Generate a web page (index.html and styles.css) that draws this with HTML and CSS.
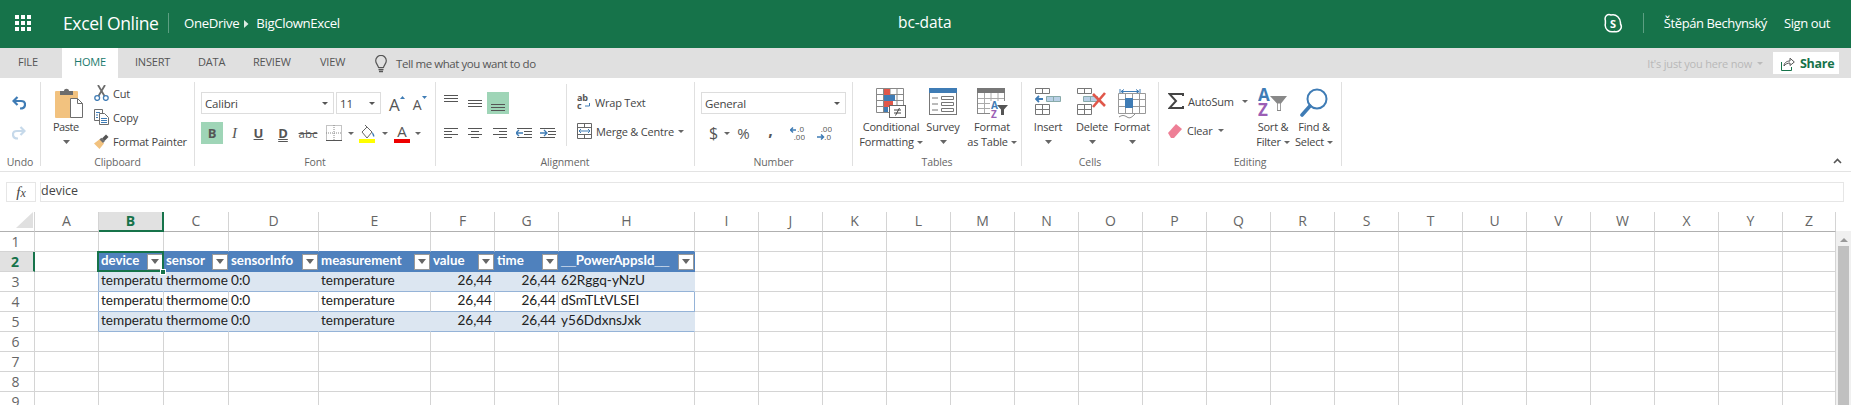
FILE: index.html
```html
<!DOCTYPE html>
<html lang="en">
<head>
<meta charset="utf-8">
<title>bc-data</title>
<link rel="stylesheet" href="styles.css">
</head>
<body>
<header class="top">
  <svg class="waffle" width="16" height="16" viewBox="0 0 16 16" fill="#fff"><rect width="4" height="4"/><rect x="6" width="4" height="4"/><rect x="12" width="4" height="4"/><rect y="6" width="4" height="4"/><rect x="6" y="6" width="4" height="4"/><rect x="12" y="6" width="4" height="4"/><rect y="12" width="4" height="4"/><rect x="6" y="12" width="4" height="4"/><rect x="12" y="12" width="4" height="4"/></svg>
  <span class="app">Excel Online</span>
  <span class="vsep"></span>
  <span class="crumb">OneDrive</span>
  <svg class="crumb-arrow" width="5" height="8" viewBox="0 0 5 8" fill="#dcebe3"><path d="M0 0l4.5 4L0 8z"/></svg>
  <span class="crumb">BigClownExcel</span>
  <span class="doc">bc-data</span>
  <svg class="skype" width="20" height="21" viewBox="0 0 20 21" fill="none" stroke="#fff" stroke-width="1.5"><path d="M2.4 7.5C1 3.5 4.800 .2 8 2c5-1.400 10 3 9.500 9 2.500 4-1.500 9-6 7.500C6 20 1.200 16 2.400 10.500z" stroke-linejoin="round"/><text x="10" y="15" text-anchor="middle" class="skype-s">S</text></svg>
  <span class="vsep sep-right"></span>
  <span class="user">Štěpán Bechynský</span>
  <span class="user signout">Sign out</span>
</header>

<nav class="tabs">
  <span class="tab file">FILE</span>
  <span class="tab home">HOME</span>
  <span class="tab insert">INSERT</span>
  <span class="tab data">DATA</span>
  <span class="tab review">REVIEW</span>
  <span class="tab view">VIEW</span>
  <svg class="bulb" width="12" height="19" viewBox="0 0 12 19" fill="none" stroke="#555" stroke-width="1.2"><path d="M3.500 12.500C3 10 .7 8.500 .7 5.700a5.300 5.300 0 0 1 10.600 0c0 2.800-2.300 4.300-2.800 6.800z"/><path d="M3.500 14.500h5M4 16.500h4" stroke-width="1.500"/></svg>
  <span class="tell">Tell me what you want to do</span>
  <span class="presence">It's just you here now</span>
  <svg class="caret presence-caret" width="6" height="3" viewBox="0 0 6 3"><path d="M0 0h6L3 3z" fill="#bbb"/></svg>
  <span class="share">
    <svg width="14" height="15" viewBox="0 0 14 15" fill="none" stroke="#16734a" stroke-width="1"><path d="M.5 6v8.500h10V11"/><path d="M3 10c0-3 2.500-5 6-5V2.200L13.300 6 9 9.500V7C6.500 7 4.500 8 3 10z" stroke="#555"/></svg>
    <b>Share</b>
  </span>
</nav>

<section class="ribbon">
  <div class="group g-undo">
    <div class="body undo-body">
      <svg width="14" height="14" viewBox="0 0 14 14" fill="none" stroke="#3f7cb5" stroke-width="2.200"><path d="M5.500 1L1.500 5l4 4"/><path d="M2 5h7c2.500 0 4 1.500 4 3.500S11.500 12.500 8 12.500"/></svg>
      <svg width="14" height="14" viewBox="0 0 14 14" fill="none" stroke="#c6d9ea" stroke-width="2.200"><path d="M8.500 1l4 4-4 4"/><path d="M12 5H5C2.500 5 1 6.500 1 8.500s1.500 4 5 4"/></svg>
    </div>
    <div class="label">Undo</div>
  </div>

  <div class="group g-clip">
    <div class="body clip-body">
      <div class="big paste">
        <svg width="28" height="31" viewBox="0 0 28 31"><rect y="3" width="23" height="27" rx="1" fill="#f2c27f"/><path d="M5 3h4c0-3 5-3 5 0h4v4H5z" fill="#6d6d6d"/><path d="M15.500 10.500h7l5 5v14h-12z" fill="#fff" stroke="#6d6d6d"/><path d="M22.500 10.500v5h5" fill="none" stroke="#6d6d6d"/></svg>
        <span class="t">Paste</span>
        <svg class="caret big-caret" width="7" height="4" viewBox="0 0 7 4"><path d="M0 0h7L3.500 4z" fill="#666"/></svg>
      </div>
      <div class="clip-list">
        <div class="row-item"><svg width="15" height="16" viewBox="0 0 15 16" fill="none"><path d="M4 0l6.500 11M11 0L4.500 11" stroke="#6d6d6d" stroke-width="1.800"/><circle cx="3.200" cy="13" r="2.400" stroke="#3f7cb5" stroke-width="1.300"/><circle cx="11.800" cy="13" r="2.400" stroke="#3f7cb5" stroke-width="1.300"/></svg><span>Cut</span></div>
        <div class="row-item"><svg width="15" height="16" viewBox="0 0 15 16" fill="#fff" stroke="#6d6d6d"><path d="M.5.500h8v11h-8z"/><path d="M5.500 4.500h5l4 4v7h-9z"/><path d="M2 3.500h4M2 6h2M2 8.500h2" stroke="#3f7cb5"/><path d="M7 9.500h6M7 11.500h6M7 13.500h6" stroke="#3f7cb5"/></svg><span>Copy</span></div>
        <div class="row-item"><svg width="15" height="15" viewBox="0 0 15 15"><path d="M0 9.500L6 5l4 4.500-4.500 5.500z" fill="#f2c27f"/><path d="M5.500 5.500l1.800-1.800 3.500 3.500L9 9z" fill="#6d6d6d"/><path d="M8 4.500l4-4 2.500 2.500-4 4z" fill="#555"/></svg><span>Format Painter</span></div>
      </div>
    </div>
    <div class="label">Clipboard</div>
  </div>

  <div class="group g-font">
    <div class="body font-body">
      <div class="tool-row first-row">
        <div class="select font-name"><span>Calibri</span><svg class="caret" width="6" height="3" viewBox="0 0 6 3"><path d="M0 0h6L3 3z" fill="#555"/></svg></div>
        <div class="select font-size"><span>11</span><svg class="caret" width="6" height="3" viewBox="0 0 6 3"><path d="M0 0h6L3 3z" fill="#555"/></svg></div>
        <span class="grow">A<svg width="5" height="3" viewBox="0 0 5 3"><path d="M2.500 0L5 3H0z" fill="#3f7cb5"/></svg></span>
        <span class="shrink">A<svg width="5" height="3" viewBox="0 0 5 3"><path d="M0 0h5L2.500 3z" fill="#3f7cb5"/></svg></span>
      </div>
      <div class="tool-row second-row">
        <span class="fmt on w22 bold">B</span>
        <span class="fmt w23 ital">I</span>
        <span class="fmt w25 under">U</span>
        <span class="fmt w24 dbl">D</span>
        <span class="fmt w26 strike">abc</span>
        <span class="fmt w26"><svg width="16" height="16" viewBox="0 0 16 16" fill="none" stroke="#888" stroke-dasharray="1 1"><path d="M.5.500h15v15H.5zM8 0v16M0 8h16"/><path d="M0 15.500h16" stroke="#555" stroke-dasharray="none"/></svg></span>
        <span class="fmt w8"><svg class="caret" width="6" height="3" viewBox="0 0 6 3"><path d="M0 0h6L3 3z" fill="#666"/></svg></span>
        <span class="fmt w25 fill"><svg width="17" height="19" viewBox="0 0 17 19"><path d="M3 8l5-5 5 5-5 6z" fill="#fff" stroke="#666"/><path d="M6 1l2 2" stroke="#666"/><path d="M13 8c2 1.500 3 4 2 5-1.200-.5-2-3-2-5z" fill="#3f7cb5"/><rect y="15" width="16" height="4" fill="#ffff00"/></svg></span>
        <span class="fmt w10"><svg class="caret" width="6" height="3" viewBox="0 0 6 3"><path d="M0 0h6L3 3z" fill="#666"/></svg></span>
        <span class="fmt w24 color-a">A</span>
        <span class="fmt w8"><svg class="caret" width="6" height="3" viewBox="0 0 6 3"><path d="M0 0h6L3 3z" fill="#666"/></svg></span>
      </div>
    </div>
    <div class="label">Font</div>
  </div>

  <div class="group g-align">
    <div class="body align-body">
      <div class="align-grid">
        <div class="tool-row a-row1">
          <span class="al w24"><svg width="14" height="7" viewBox="0 0 14 7" stroke="#555"><path d="M0 .500h14M0 3.500h14M0 6.500h14"/></svg></span>
          <span class="al w24"><svg width="14" height="7" viewBox="0 0 14 7" stroke="#555"><path d="M0 .500h14M0 3.500h14M0 6.500h14"/></svg></span>
          <span class="al on w22 bottom"><svg width="14" height="7" viewBox="0 0 14 7" stroke="#555"><path d="M0 .500h14M0 3.500h14M0 6.500h14"/></svg></span>
        </div>
        <div class="tool-row a-row2">
          <span class="al w24"><svg width="14" height="11" viewBox="0 0 14 11" stroke="#555"><path d="M0 .500h14M0 3.500h8M0 6.500h14M0 9.500h8"/></svg></span>
          <span class="al w24"><svg width="14" height="11" viewBox="0 0 14 11" stroke="#555"><path d="M0 .500h14M3 3.500h8M0 6.500h14M3 9.500h8"/></svg></span>
          <span class="al w25"><svg width="14" height="11" viewBox="0 0 14 11" stroke="#555"><path d="M0 .500h14M6 3.500h8M0 6.500h14M6 9.500h8"/></svg></span>
          <span class="al w24"><svg width="16" height="11" viewBox="0 0 16 11" fill="none" stroke="#555"><path d="M1 .500h15M8 3.500h8M8 6.500h8M1 9.500h15"/><path d="M0 5h7M3 2L0 5l3 3" stroke="#3f7cb5" stroke-width="1.300"/></svg></span>
          <span class="al w24"><svg width="16" height="11" viewBox="0 0 16 11" fill="none" stroke="#555"><path d="M0 .500h15M8 3.500h8M8 6.500h8M0 9.500h15"/><path d="M0 5h7M4 2l3 3-3 3" stroke="#3f7cb5" stroke-width="1.300"/></svg></span>
        </div>
      </div>
      <div class="wrap-col">
        <div class="row-item"><svg width="14" height="16" viewBox="0 0 14 16"><text x="0" y="7" class="mini-ab">ab</text><text x="0" y="15" class="mini-ab">c</text><path d="M12.500 9v3H8" fill="none" stroke="#3f7cb5"/></svg><span>Wrap Text</span></div>
        <div class="row-item"><svg width="15" height="16" viewBox="0 0 15 16" fill="none" stroke="#666"><path d="M.5.500h14v15H.5zM0 4.500h15M0 11.500h15M7.500 0v4M7.500 12v4"/><path d="M2 8h11M4 6L2 8l2 2M11 6l2 2-2 2" stroke="#3f7cb5"/></svg><span>Merge &amp; Centre</span><svg class="caret" width="6" height="3" viewBox="0 0 6 3"><path d="M0 0h6L3 3z" fill="#666"/></svg></div>
      </div>
    </div>
    <div class="label">Alignment</div>
  </div>

  <div class="group g-number">
    <div class="body number-body">
      <div class="select general"><span>General</span><svg class="caret" width="6" height="3" viewBox="0 0 6 3"><path d="M0 0h6L3 3z" fill="#555"/></svg></div>
      <div class="tool-row num-row">
        <span class="num dollar">$</span>
        <svg class="caret" width="6" height="3" viewBox="0 0 6 3"><path d="M0 0h6L3 3z" fill="#666"/></svg>
        <span class="num pct">%</span>
        <span class="num comma">,</span>
        <svg class="dec" width="15" height="16" viewBox="0 0 15 16"><text x="14" y="7" text-anchor="end" class="mini-dec">.0</text><text x="15" y="15" text-anchor="end" class="mini-dec">.00</text><path d="M0 5h6M3 2.500L.5 5 3 7.500" fill="none" stroke="#3f7cb5" stroke-width="1.500"/></svg>
        <svg class="dec" width="15" height="16" viewBox="0 0 15 16"><text x="15" y="7" text-anchor="end" class="mini-dec">.00</text><text x="14" y="15" text-anchor="end" class="mini-dec">.0</text><path d="M0 12h6M4 9.500L6.500 12 4 14.500" fill="none" stroke="#3f7cb5" stroke-width="1.500"/></svg>
      </div>
    </div>
    <div class="label">Number</div>
  </div>

  <div class="group g-tables">
    <div class="body big-row tables-body">
      <div class="big cf">
        <svg width="30" height="31" viewBox="0 0 30 31"><g fill="none" stroke="#888"><path d="M.5.500h27v24H.5zM.5 6.500h27M.5 12.500h27M.5 18.500h27M7.500 0v25M14 0v25M21 0v25"/></g><path d="M8 1h6v6H8z" fill="#e0574a"/><path d="M8 7h11v6H8z" fill="#3f7cb5"/><path d="M8 13h9v6H8z" fill="#e0574a"/><path d="M8 19h4v5H8z" fill="#3f7cb5"/><rect x="13.500" y="17.500" width="16" height="12" fill="#fff" stroke="#666"/><path d="M18 22h7M18 25h7M23.500 20l-4 7.500" fill="none" stroke="#444"/></svg>
        <span class="t">Conditional</span>
        <span class="t">Formatting<svg class="caret in" width="6" height="3" viewBox="0 0 6 3"><path d="M0 0h6L3 3z" fill="#666"/></svg></span>
      </div>
      <div class="big survey">
        <svg width="28" height="31" viewBox="0 0 28 31"><rect x=".5" y=".5" width="27" height="26" fill="#fff" stroke="#777"/><rect width="28" height="5" fill="#3f7cb5"/><path d="M3 10h6M3 16h6M3 22h6" stroke="#777"/><path d="M12.500 8.500h12v3h-12zM12.500 14.500h12v3h-12zM12.500 20.500h12v3h-12z" fill="none" stroke="#777"/></svg>
        <span class="t">Survey</span>
        <svg class="caret big-caret" width="7" height="4" viewBox="0 0 7 4"><path d="M0 0h7L3.500 4z" fill="#666"/></svg>
      </div>
      <div class="big fat">
        <svg width="31" height="31" viewBox="0 0 31 31"><rect x=".5" y=".5" width="27" height="25" fill="#fff" stroke="#888"/><path d="M0 0h28v5H0z" fill="#777"/><path d="M1 10.500h26M1 15.500h26M1 20.500h26M7.500 5v20M14 5v20M21 5v20" stroke="#aaa"/><rect x="13" y="13" width="18" height="18" fill="#fff"/><text x="14" y="21" class="mini-a">A</text><text x="14" y="30" class="mini-z">Z</text><path d="M20 17h11l-4 4.500V27h-3v-5.500z" fill="#555"/></svg>
        <span class="t">Format</span>
        <span class="t">as Table<svg class="caret in" width="6" height="3" viewBox="0 0 6 3"><path d="M0 0h6L3 3z" fill="#666"/></svg></span>
      </div>
    </div>
    <div class="label">Tables</div>
  </div>

  <div class="group g-cells">
    <div class="body big-row cells-body">
      <div class="big b-insert">
        <svg width="26" height="31" viewBox="0 0 26 31" fill="none" stroke="#777"><path d="M.5.500h14v5H.5zM7.500 0v6M.5 16.500h14v10H.5zM7.500 16v11M0 21.500h15"/><path d="M11.500 8.500h14v5h-14zM18.500 8v6" fill="#b9d0e6" stroke="#8aa"/><path d="M1 11h7M4 8l-3 3 3 3" stroke="#3f7cb5" stroke-width="1.800"/></svg>
        <span class="t">Insert</span>
        <svg class="caret big-caret" width="7" height="4" viewBox="0 0 7 4"><path d="M0 0h7L3.500 4z" fill="#666"/></svg>
      </div>
      <div class="big b-delete">
        <svg width="30" height="31" viewBox="0 0 30 31" fill="none" stroke="#777"><path d="M.5.500h14v5H.5zM7.500 0v6M.5 16.500h14v10H.5zM7.500 16v11M0 21.500h15"/><path d="M6.500 8.500h14v5h-14zM13.500 8v6" fill="#b9d0e6" stroke="#8aa"/><path d="M16 6l12 12M28 5L16 19" stroke="#e0574a" stroke-width="2.600"/></svg>
        <span class="t">Delete</span>
        <svg class="caret big-caret" width="7" height="4" viewBox="0 0 7 4"><path d="M0 0h7L3.500 4z" fill="#666"/></svg>
      </div>
      <div class="big b-format">
        <svg width="28" height="31" viewBox="0 0 28 31" fill="none"><path d="M2 1v5M22 1v5M3 3.500h18M6 1.500L3 3.500l3 2M18 1.500l3 2-3 2" stroke="#3f7cb5"/><path d="M.5 5.500h27v20H.5zM7.500 5v20M14.500 5v20M21.500 5v20M0 11.500h28M0 18.500h28" stroke="#999"/><rect x="7" y="10" width="8" height="10" fill="#3f7cb5"/><path d="M1 29c3-2 5-2 8 0s5 0 8-3" stroke="#888"/></svg>
        <span class="t">Format</span>
        <svg class="caret big-caret" width="7" height="4" viewBox="0 0 7 4"><path d="M0 0h7L3.500 4z" fill="#666"/></svg>
      </div>
    </div>
    <div class="label">Cells</div>
  </div>

  <div class="group g-edit">
    <div class="body edit-body">
      <div class="edit-list">
        <div class="row-item"><svg width="16" height="16" viewBox="0 0 16 16" fill="none" stroke="#444" stroke-width="2"><path d="M15 3V1H1.500L8 8l-6.500 7H15v-2"/></svg><span>AutoSum</span><svg class="caret" width="6" height="3" viewBox="0 0 6 3"><path d="M0 0h6L3 3z" fill="#666"/></svg></div>
        <div class="row-item"><svg width="15" height="15" viewBox="0 0 15 15"><path d="M0 10l8-9 6 5-8 9H3z" fill="#ee7f96"/></svg><span class="clear-t">Clear</span><svg class="caret" width="6" height="3" viewBox="0 0 6 3"><path d="M0 0h6L3 3z" fill="#666"/></svg></div>
      </div>
      <div class="big b-sort">
        <svg width="30" height="31" viewBox="0 0 30 31"><text x="0" y="13" class="sort-a">A</text><text x="0" y="28" class="sort-z">Z</text><path d="M12 8h17l-6 7.500V23h-4v-7.500z" fill="#888"/><path d="M19.800 15.500h2.400v6.500h-2.400z" fill="#fff"/></svg>
        <span class="t">Sort &amp;</span>
        <span class="t">Filter<svg class="caret in" width="6" height="3" viewBox="0 0 6 3"><path d="M0 0h6L3 3z" fill="#666"/></svg></span>
      </div>
      <div class="big b-find">
        <svg width="28" height="31" viewBox="0 0 28 31" fill="none" stroke="#3f7cb5"><circle cx="17" cy="11" r="9.500" stroke-width="2"/><path d="M10 18L2 27" stroke-width="3.600" stroke-linecap="round"/></svg>
        <span class="t">Find &amp;</span>
        <span class="t">Select<svg class="caret in" width="6" height="3" viewBox="0 0 6 3"><path d="M0 0h6L3 3z" fill="#666"/></svg></span>
      </div>
    </div>
    <div class="label">Editing</div>
  </div>

  <svg class="collapse" width="9" height="6" viewBox="0 0 9 6" fill="none" stroke="#555" stroke-width="1.600"><path d="M1 5l3.500-3.500L8 5"/></svg>
</section>

<section class="formula">
  <span class="fx"><i>f<small>x</small></i></span>
  <div class="fbox">device</div>
</section>

<section class="sheet">
  <table class="grid">
    <colgroup><col class="c0"><col class="c64"><col class="c65"><col class="c65"><col class="c90"><col class="c112"><col class="c64"><col class="c64"><col class="c136"><col class="c64"><col class="c64"><col class="c64"><col class="c64"><col class="c64"><col class="c64"><col class="c64"><col class="c64"><col class="c64"><col class="c64"><col class="c64"><col class="c64"><col class="c64"><col class="c64"><col class="c64"><col class="c64"><col class="c64"><col class="c53"></colgroup>
    <tr class="heads">
      <th class="corner"><svg width="17" height="16" viewBox="0 0 17 16"><path d="M17 0v16H0z" fill="#e0e0e0"/></svg></th>
      <th>A</th><th class="sel">B</th><th>C</th><th>D</th><th>E</th><th>F</th><th>G</th><th>H</th><th>I</th><th>J</th><th>K</th><th>L</th><th>M</th><th>N</th><th>O</th><th>P</th><th>Q</th><th>R</th><th>S</th><th>T</th><th>U</th><th>V</th><th>W</th><th>X</th><th>Y</th><th>Z</th>
    </tr>
    <tr class="above"><th>1</th><td></td><td></td><td></td><td></td><td></td><td></td><td></td><td></td><td></td><td></td><td></td><td></td><td></td><td></td><td></td><td></td><td></td><td></td><td></td><td></td><td></td><td></td><td></td><td></td><td></td><td></td></tr>
    <tr class="thead"><th class="sel">2</th><td></td>
      <td class="active"><div class="hc"><span>device</span><i class="filter"></i></div><span class="cursor"></span><span class="handle"></span></td>
      <td><div class="hc"><span>sensor</span><i class="filter"></i></div></td>
      <td><div class="hc"><span>sensorInfo</span><i class="filter"></i></div></td>
      <td><div class="hc"><span>measurement</span><i class="filter"></i></div></td>
      <td><div class="hc"><span>value</span><i class="filter"></i></div></td>
      <td><div class="hc"><span>time</span><i class="filter"></i></div></td>
      <td><div class="hc"><span class="wide-id"><b>__</b>PowerAppsId<b>__</b></span><i class="filter"></i></div></td>
      <td></td><td></td><td></td><td></td><td></td><td></td><td></td><td></td><td></td><td></td><td></td><td></td><td></td><td></td><td></td><td></td><td></td><td></td></tr>
    <tr class="band data"><th>3</th><td></td><td>temperature</td><td>thermometer</td><td>0:0</td><td>temperature</td><td class="n">26,44</td><td class="n">26,44</td><td>62Rggq-yNzU</td><td></td><td></td><td></td><td></td><td></td><td></td><td></td><td></td><td></td><td></td><td></td><td></td><td></td><td></td><td></td><td></td><td></td><td></td></tr>
    <tr class="data"><th>4</th><td></td><td>temperature</td><td>thermometer</td><td>0:0</td><td>temperature</td><td class="n">26,44</td><td class="n">26,44</td><td>dSmTLtVLSEI</td><td></td><td></td><td></td><td></td><td></td><td></td><td></td><td></td><td></td><td></td><td></td><td></td><td></td><td></td><td></td><td></td><td></td><td></td></tr>
    <tr class="band data"><th>5</th><td></td><td>temperature</td><td>thermometer</td><td>0:0</td><td>temperature</td><td class="n">26,44</td><td class="n">26,44</td><td>y56DdxnsJxk</td><td></td><td></td><td></td><td></td><td></td><td></td><td></td><td></td><td></td><td></td><td></td><td></td><td></td><td></td><td></td><td></td><td></td><td></td></tr>
    <tr><th>6</th><td></td><td></td><td></td><td></td><td></td><td></td><td></td><td></td><td></td><td></td><td></td><td></td><td></td><td></td><td></td><td></td><td></td><td></td><td></td><td></td><td></td><td></td><td></td><td></td><td></td><td></td></tr>
    <tr><th>7</th><td></td><td></td><td></td><td></td><td></td><td></td><td></td><td></td><td></td><td></td><td></td><td></td><td></td><td></td><td></td><td></td><td></td><td></td><td></td><td></td><td></td><td></td><td></td><td></td><td></td><td></td></tr>
    <tr><th>8</th><td></td><td></td><td></td><td></td><td></td><td></td><td></td><td></td><td></td><td></td><td></td><td></td><td></td><td></td><td></td><td></td><td></td><td></td><td></td><td></td><td></td><td></td><td></td><td></td><td></td><td></td></tr>
    <tr><th>9</th><td></td><td></td><td></td><td></td><td></td><td></td><td></td><td></td><td></td><td></td><td></td><td></td><td></td><td></td><td></td><td></td><td></td><td></td><td></td><td></td><td></td><td></td><td></td><td></td><td></td><td></td></tr>
  </table>
  <aside class="scrollbar">
    <svg width="8" height="4" viewBox="0 0 8 4"><path d="M4 0l4 4H0z" fill="#999"/></svg>
    <div class="thumb"></div>
  </aside>
</section>
</body>
</html>
```
FILE: styles.css
```css
* { box-sizing: border-box; }
html, body { margin: 0; height: 405px; overflow: hidden; background: #fff; }
body { font-family: "Open Sans", "Noto Sans", sans-serif; color: #444; font-size: 11px; width: 1851px; }
svg { display: block; flex: none; }

/* top bar */
.top { height: 48px; background: #16734a; color: #fff; display: flex; align-items: center; padding-left: 15px; position: relative; padding-bottom: 2px; }
.waffle { margin-right: 32px; }
.app { font-size: 17.5px; letter-spacing: -.35px; width: 105px; }
.vsep { width: 1px; height: 20px; background: #5c9f82; }
.crumb { font-size: 13.2px; letter-spacing: -.35px; }
.top .vsep + .crumb { margin-left: 15px; }
.crumb-arrow { margin: 2px 7px 0 5px; }
.doc { position: absolute; left: 898px; top: 11px; font-size: 15.5px; letter-spacing: -.1px; }
.skype { margin-left: auto; margin-right: 20px; }
.skype-s { font: 700 11px "Open Sans", sans-serif; fill: #fff; stroke: none; }
.sep-right { margin-right: 20px; }
.user { font-size: 13px; letter-spacing: -.4px; }
.signout { margin-left: 17px; margin-right: 21px; }

/* tabs */
.tabs { height: 30px; background: #e0e0e0; display: flex; align-items: center; font-size: 11px; color: #555; position: relative; }
.tab { display: block; letter-spacing: -.2px; margin-bottom: 3px; }
.file { margin-left: 18px; width: 44px; }
.home { background: #fff; color: #1a7a6d; height: 30px; width: 56px; text-align: center; line-height: 27px; margin: 0 17px 0 0; }
.insert { width: 63px; }
.data { width: 55px; }
.review { width: 67px; }
.view { width: 55px; }
.bulb { margin-right: 9px; margin-top: 2px; }
.tell { font-size: 11.5px; letter-spacing: -.43px; }
.presence { margin-left: auto; color: #b8b8b8; letter-spacing: -.2px; }
.presence-caret { margin: 0 10px 0 5px; }
.share { background: #fff; width: 66px; height: 22px; margin-right: 12px; display: flex; align-items: center; gap: 5px; padding-left: 8px; color: #16734a; font-size: 12.5px; letter-spacing: -.3px; margin-top: 0; }

/* ribbon */
.ribbon { height: 94px; padding-top: 4px; border-bottom: 1px solid #e3e3e3; display: flex; position: relative; }
.group { height: 84px; border-right: 1px solid #e0e0e0; display: flex; flex-direction: column; flex: none; }
.body { height: 74px; flex: none; }
.label { height: 12px; line-height: 12px; text-align: center; color: #666; font-size: 10.5px; letter-spacing: -.1px; flex: none; }
.g-undo { width: 41px; }
.g-clip { width: 154px; }
.g-font { width: 241px; }
.g-align { width: 259px; }
.g-number { width: 158px; }
.g-tables { width: 169px; }
.g-cells { width: 137px; }
.g-edit { width: 183px; }
.collapse { position: absolute; left: 1833px; top: 80px; }

.undo-body { padding: 14px 0 0 12px; display: flex; flex-direction: column; gap: 16px; }

.big { display: flex; flex-direction: column; align-items: center; flex: none; padding-top: 6px; }
.big > svg:first-child { margin-bottom: 0; }
.big .t { line-height: 15px; white-space: nowrap; font-size: 11px; letter-spacing: -.2px; display: flex; align-items: center; gap: 3px; }
.big-caret { margin-top: 6px; }
.caret.in { margin-top: 2px; }

.clip-body { display: flex; padding-left: 14px; }
.paste { width: 28px; align-items: flex-start; }
.paste .t { margin-left: -2px; letter-spacing: -.5px; }
.paste .big-caret { margin-left: 8px; }
.clip-list { padding: 3px 0 0 11px; display: flex; flex-direction: column; gap: 8px; }
.row-item { display: flex; align-items: center; gap: 4px; white-space: nowrap; height: 16px; letter-spacing: -.2px; }

.font-body { padding: 10px 0 0 6px; }
.tool-row { display: flex; align-items: center; }
.select { height: 22px; border: 1px solid #ddd; display: flex; align-items: center; justify-content: space-between; padding: 0 5px 0 3px; font-size: 11.5px; letter-spacing: -.2px; }
.font-name { width: 133px; }
.font-size { width: 45px; margin-left: 2px; }
.grow, .shrink { display: flex; align-items: flex-start; height: 22px; line-height: 26px; color: #555; }
.grow svg, .shrink svg { margin-top: 4px; }
.grow { margin-left: 8px; font-size: 17px; }
.shrink { margin-left: 8px; font-size: 14px; }
.second-row { margin-top: 8px; height: 22px; }
.fmt, .al { height: 22px; display: flex; align-items: center; justify-content: center; font-size: 13px; color: #555; flex: none; }
.on { background: #9fd5b7; }
.w8 { width: 8px; } .w10 { width: 10px; } .w22 { width: 22px; } .w23 { width: 23px; } .w24 { width: 24px; } .w25 { width: 25px; } .w26 { width: 26px; }
.bold { font-weight: 700; }
.ital { font-family: "Liberation Serif", serif; font-style: italic; font-size: 15px; }
.under { font-weight: 700; text-decoration: underline; }
.dbl { font-weight: 700; text-decoration: underline double; }
.strike { text-decoration: line-through; font-size: 11.5px; }
.color-a { font-size: 15px; border-bottom: 4px solid #ee0000; height: 19px; width: 16px; margin: 0 4px; line-height: 15px; }

.align-body { display: flex; padding: 10px 0 0 0; }
.align-grid { width: 131px; height: 62px; border-right: 1px solid #e0e0e0; padding-left: 3px; margin-top: -8px; padding-top: 8px; }
.a-row1 .al:nth-child(1) { align-items: flex-start; padding-top: 3px; }
.a-row1 .bottom { align-items: flex-end; padding-bottom: 3px; }
.a-row2 { margin-top: 8px; height: 22px; }
.wrap-col { padding: 2px 0 0 10px; display: flex; flex-direction: column; gap: 13px; }
.mini-ab { font: 700 9px "Open Sans", sans-serif; fill: #555; }

.number-body { padding: 10px 0 0 6px; }
.general { width: 145px; }
.num-row { height: 22px; margin-top: 8px; padding-left: 8px; }
.num { font-size: 16px; color: #555; display: block; }
.dollar { margin-right: 6px; }
.pct { margin-left: 7px; width: 31px; font-size: 15px; }
.comma { font-weight: 700; width: 22px; padding-bottom: 6px; }
.dec { margin-right: 12px; }
.mini-dec { font: 400 8px "Open Sans", sans-serif; fill: #555; }

.big-row { display: flex; }
.cf { width: 60px; margin-left: 8px; }
.survey { width: 44px; }
.fat { width: 50px; margin-left: 2px; }
.mini-a { font: 700 10px "Open Sans", sans-serif; fill: #3f7cb5; }
.mini-z { font: 700 10px "Open Sans", sans-serif; fill: #9b5fb5; }
.cells-body { padding-left: 13px; }
.b-insert { width: 26px; }
.b-delete { width: 30px; margin-left: 16px; }
.b-format { width: 28px; margin-left: 11px; }

.edit-body { display: flex; }
.edit-list { padding: 11px 0 0 9px; width: 99px; display: flex; flex-direction: column; gap: 13px; }
.edit-list .caret { margin-left: 4px; }
.edit-list .clear-t + .caret { margin-left: 1px; }
.b-sort { width: 30px; }
.b-find { width: 28px; margin-left: 12px; }
.sort-a { font: 700 17px "Open Sans", sans-serif; fill: #3f7cb5; }
.sort-z { font: 700 17px "Open Sans", sans-serif; fill: #9b5fb5; }

/* formula bar */
.formula { margin-top: 10px; height: 20px; padding: 0 7px 0 6px; display: flex; gap: 4px; }
.fx { width: 30px; border: 1px solid #e6e6e6; display: flex; align-items: center; justify-content: center; font-family: "Liberation Serif", serif; font-size: 15px; color: #444; }
.fx small { font-size: 12px; }
.fbox { flex: 1; border: 1px solid #e6e6e6; padding-left: 0; line-height: 16px; font-size: 12.5px; color: #444; }

/* sheet */
.sheet { margin-top: 10px; height: 193px; display: flex; overflow: hidden; }
.grid { width: 1836px; flex: none; table-layout: fixed; border-collapse: separate; border-spacing: 0; font-family: Lato, "Liberation Sans", sans-serif; font-size: 13.6px; color: #222; align-self: flex-start; }
.c0 { width: 35px; } .c64 { width: 64px; } .c65 { width: 65px; } .c90 { width: 90px; } .c112 { width: 112px; } .c136 { width: 136px; } .c53 { width: 53px; }
.grid tr { height: 20px; }
.grid td, .grid th { border-right: 1px solid #d4d4d4; border-bottom: 1px solid #d4d4d4; padding: 0; height: 20px; overflow: hidden; white-space: nowrap; line-height: 15px; vertical-align: top; padding-top: 1px; }
.grid td { padding: 1px 0 0 2px; }
.grid td.n { text-align: right; padding: 1px 2px 0 0; }
.grid th { font: 400 14px/17px "Open Sans", sans-serif; color: #666; text-align: center; padding-right: 3px; }
.heads { height: 19px; }
.grid .heads th { height: 19px; border-bottom-color: #b0b0b0; padding: 0; color: #666; }
.corner svg { margin-left: 16px; }
.grid .heads th.sel { background: #e1e1e1; color: #16734a; font-weight: 700; border-bottom: 2px solid #16734a; }
.grid th.sel { background: #e1e1e1; color: #16734a; font-weight: 700; border-right: 2px solid #16734a; }

.above td:nth-child(n+3):nth-child(-n+9) { border-bottom-color: #4f81bd; }
.thead td:nth-child(2) { border-right-color: #4f81bd; }
.grid .thead td:nth-child(n+3):nth-child(-n+9) { background: #4f81bd; border-color: #4f81bd; color: #fff; font-weight: 700; font-size: 13.3px; overflow: visible; padding-top: 0; }
.hc { display: flex; justify-content: space-between; align-items: center; height: 19px; }
.hc span { margin-top: -2px; }
.wide-id b { font-family: "Liberation Sans", sans-serif; }
.filter { width: 16px; height: 16px; background: #fff; border: 1px solid #999; display: flex; align-items: center; justify-content: center; flex: none; }
.filter::after { content: ""; border: 4px solid transparent; border-top: 5px solid #666; border-bottom: 0; }

.active { position: relative; }
.cursor { position: absolute; left: -2px; top: -1px; width: 67px; height: 21px; border: 2px solid #16734a; }
.handle { position: absolute; left: 61px; top: 17px; width: 6px; height: 6px; background: #16734a; border: 1px solid #fff; z-index: 2; }

.data td:nth-child(2) { border-right-color: #95b3d7; }
.data td:nth-child(n+3):nth-child(-n+9) { border-bottom-color: #95b3d7; }
.data td:nth-child(9) { border-right-color: #95b3d7; }
.band td:nth-child(n+3):nth-child(-n+9) { background: #dce6f1; border-right-color: #dce6f1; }
.band td:nth-child(9) { border-right-color: #95b3d7; }

.scrollbar { width: 15px; margin-top: 19px; background: #f0f0f0; display: flex; flex-direction: column; align-items: center; padding-top: 7px; }
.thumb { width: 11px; flex: 1; margin-top: 4px; background: #c0c0c0; }
```
